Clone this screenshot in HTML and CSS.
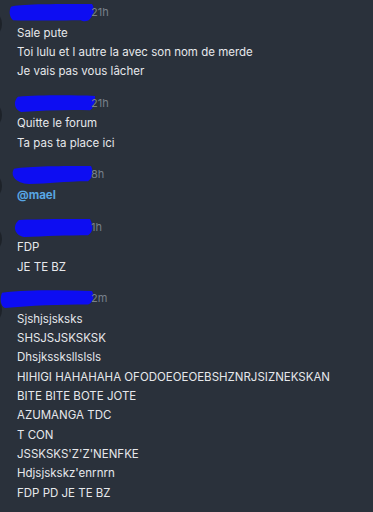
FILE: index.html
```html
<!DOCTYPE html>
<html lang="fr">
<head>
    <meta charset="UTF-8">
    <meta name="viewport" content="width=device-width, initial-scale=1.0">
    <title>Messages</title>
    <link rel="stylesheet" href="styles.css">
</head>
<body>

    <div class="feed">

        <div class="msg">
            <div class="avatar"></div>
            <div class="msg-body">
                <div class="msg-header">
                    <svg class="blot" viewBox="0 0 86 20" preserveAspectRatio="none"><path d="M2 3 C10 0, 40 0, 83 0 C86 5, 85 12, 82 15 C80 20, 74 20, 72 18 C55 18, 25 19, 4 18 C0 14, 0 7, 2 3 Z"/></svg>
                    <span class="time">21h</span>
                </div>
                <p>Sale pute</p>
                <p>Toi lulu et l autre la avec son nom de merde</p>
                <p>Je vais pas vous lâcher</p>
            </div>
        </div>

        <div class="msg">
            <div class="avatar"></div>
            <div class="msg-body">
                <div class="msg-header">
                    <svg class="blot" viewBox="0 0 86 20" preserveAspectRatio="none"><path d="M9 2 C30 0, 60 0, 86 1 C86 8, 85 14, 81 17 C60 16, 35 17, 12 19 C5 16, 4 7, 9 2 Z"/></svg>
                    <span class="time">21h</span>
                </div>
                <p>Quitte le forum</p>
                <p>Ta pas ta place ici</p>
            </div>
        </div>

        <div class="msg">
            <div class="avatar"></div>
            <div class="msg-body">
                <div class="msg-header">
                    <svg class="blot" viewBox="0 0 86 20" preserveAspectRatio="none"><path d="M5 3 C20 0, 55 0, 82 0 C85 7, 83 14, 79 17 C55 17, 40 20, 20 20 C6 19, 1 10, 5 3 Z"/></svg>
                    <span class="time">8h</span>
                </div>
                <p class="mention">@mael</p>
            </div>
        </div>

        <div class="msg">
            <div class="avatar"></div>
            <div class="msg-body">
                <div class="msg-header">
                    <svg class="blot" viewBox="0 0 86 20" preserveAspectRatio="none"><path d="M10 1 C30 0, 60 0, 81 0 C85 8, 84 15, 79 18 C60 18, 35 19, 15 20 C4 17, 4 6, 10 1 Z"/></svg>
                    <span class="time">1h</span>
                </div>
                <p>FDP</p>
                <p>JE TE BZ</p>
            </div>
        </div>

        <div class="msg">
            <div class="avatar"></div>
            <div class="msg-body">
                <div class="msg-header">
                    <svg class="blot blot-wide" viewBox="0 0 95 20" preserveAspectRatio="none"><path d="M2 3 C25 0, 60 0, 92 1 C95 8, 93 14, 88 16 C60 16, 30 17, 5 20 C0 18, 0 8, 2 3 Z"/></svg>
                    <span class="time">2m</span>
                </div>
                <p>Sjshjsjsksks</p>
                <p>SHSJSJSKSKSK</p>
                <p>Dhsjkssksllslsls</p>
                <p>HIHIGI HAHAHAHA OFODOEOEOEBSHZNRJSIZNEKSKAN</p>
                <p>BITE BITE BOTE JOTE</p>
                <p>AZUMANGA TDC</p>
                <p>T CON</p>
                <p>JSSKSKS'Z'Z'NENFKE</p>
                <p>Hdjsjskskz'enrnrn</p>
                <p>FDP PD JE TE BZ</p>
            </div>
        </div>

    </div>

</body>
</html>
```

FILE: styles.css
```css
* {
    margin: 0;
    padding: 0;
    box-sizing: border-box;
}

body {
    background: #2a313b;
    color: #e6e8eb;
    font-family: "Inter", "Noto Sans", sans-serif;
    font-size: 11.5px;
    height: 100vh;
    overflow: hidden;
}

.feed {
    display: flex;
    flex-direction: column;
    gap: 11.5px;
    padding-top: 2px;
    margin-left: -28px;
}

.msg {
    display: flex;
    gap: 15px;
}

.avatar {
    width: 30px;
    height: 30px;
    flex-shrink: 0;
    margin-top: 7px;
    border-radius: 50%;
    background: #1d2229;
}

.msg-body {
    display: flex;
    flex-direction: column;
}

.msg-header {
    display: flex;
    align-items: center;
    height: 20px;
    margin-bottom: 1.5px;
}

.blot {
    display: block;
    flex-shrink: 0;
    width: 86px;
    height: 18px;
    margin-left: -8px;
    margin-top: 2px;
    fill: #0d0df2;
}

.blot-wide {
    width: 95px;
    margin-left: -17px;
}

.time {
    margin-left: -4px;
    color: #77808b;
    font-size: 11px;
}

.msg-body p {
    line-height: 19.3px;
    white-space: nowrap;
}

.msg-body p.mention {
    color: #58a6e3;
    font-weight: 700;
}
```
